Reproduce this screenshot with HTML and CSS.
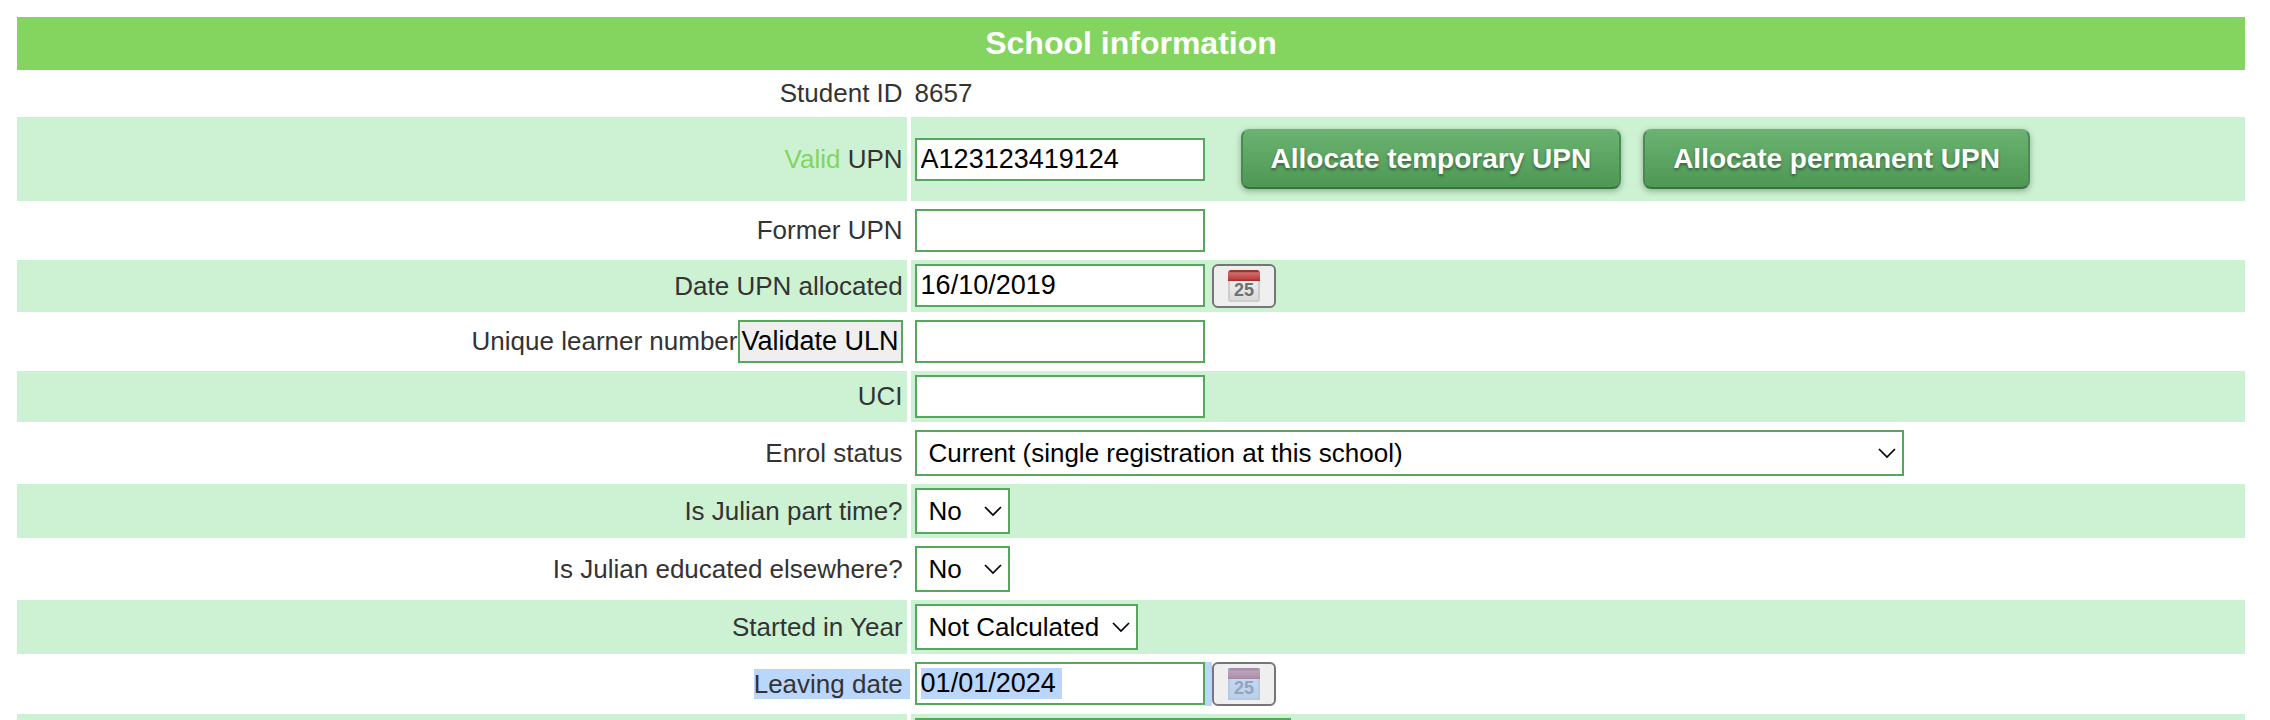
FILE: index.html
```html
<!DOCTYPE html>
<html lang="en">
<head>
  <meta charset="UTF-8">
  <title>School information</title>
  <link rel="stylesheet" href="styles.css">
</head>
<body>
  <svg width="0" height="0" class="defs" aria-hidden="true">
    <defs>
      <linearGradient id="red" x1="0" y1="0" x2="0" y2="1">
        <stop offset="0" stop-color="#a33a38"/>
        <stop offset="0.3" stop-color="#cd6a67"/>
        <stop offset="0.8" stop-color="#bd4441"/>
        <stop offset="1" stop-color="#a02825"/>
      </linearGradient>
      <linearGradient id="page" x1="0" y1="0" x2="0" y2="1">
        <stop offset="0" stop-color="#f2f2f2"/>
        <stop offset="1" stop-color="#d8d8d8"/>
      </linearGradient>
      <symbol id="calendar" viewBox="0 0 32 32">
        <rect x="1" y="8" width="30" height="23" rx="2" fill="url(#page)" stroke="#cdcdcd" stroke-width="2"/>
        <path d="M0 11V3a3 3 0 0 1 3-3h26a3 3 0 0 1 3 3v8z" fill="url(#red)"/>
        <path d="M2 1h28" stroke="#983432" stroke-width="2"/>
        <text x="16" y="26" text-anchor="middle" font-size="18" font-weight="bold" fill="#707070">25</text>
      </symbol>
    </defs>
  </svg>
  <form>
  <table>
    <thead>
      <tr>
        <th colspan="2">School information</th>
      </tr>
    </thead>
    <tbody>
      <tr>
        <td class="name">Student ID</td>
        <td>8657</td>
      </tr>
      <tr>
        <td class="name"><span class="valid">Valid</span> <label for="upn">UPN</label></td>
        <td>
          <div class="upn">
            <input type="text" id="upn" value="A123123419124">
            <div class="actions">
              <button type="button" class="allocate">Allocate temporary UPN</button>
              <button type="button" class="allocate">Allocate permanent UPN</button>
            </div>
          </div>
        </td>
      </tr>
      <tr>
        <td class="name"><label for="former">Former UPN</label></td>
        <td><input type="text" id="former"></td>
      </tr>
      <tr>
        <td class="name"><label for="allocated">Date UPN allocated</label></td>
        <td>
          <div class="date">
            <input type="text" id="allocated" value="16/10/2019"><span class="space"></span><button type="button" class="picker" aria-label="Pick date"><svg width="32" height="32"><use href="#calendar"/></svg></button>
          </div>
        </td>
      </tr>
      <tr>
        <td class="name"><div class="uln"><label for="uln">Unique learner number</label><button type="button" class="validate">Validate ULN</button></div></td>
        <td><input type="text" id="uln"></td>
      </tr>
      <tr>
        <td class="name"><label for="uci">UCI</label></td>
        <td><input type="text" id="uci"></td>
      </tr>
      <tr>
        <td class="name"><label for="enrol">Enrol status</label></td>
        <td>
          <select id="enrol" class="wide">
            <option>Current (single registration at this school)</option>
          </select>
        </td>
      </tr>
      <tr>
        <td class="name"><label for="parttime">Is Julian part time?</label></td>
        <td>
          <select id="parttime">
            <option>No</option>
            <option>Yes</option>
          </select>
        </td>
      </tr>
      <tr>
        <td class="name"><label for="elsewhere">Is Julian educated elsewhere?</label></td>
        <td>
          <select id="elsewhere">
            <option>No</option>
            <option>Yes</option>
          </select>
        </td>
      </tr>
      <tr>
        <td class="name"><label for="started">Started in Year</label></td>
        <td>
          <select id="started">
            <option>Not Calculated</option>
          </select>
        </td>
      </tr>
      <tr class="selected">
        <td class="name"><label for="leaving">Leaving date</label></td>
        <td>
          <div class="date">
            <input type="text" id="leaving" value="01/01/2024"><span class="space"></span><button type="button" class="picker" aria-label="Pick date"><svg width="32" height="32"><use href="#calendar"/></svg></button>
          </div>
        </td>
      </tr>
      <tr>
        <td class="name"></td>
        <td><select class="reason" aria-label="Leaving reason"></select></td>
      </tr>
    </tbody>
  </table>
  </form>
</body>
</html>
```
FILE: styles.css
```css
* {
  box-sizing: border-box;
}
html {
  overflow: hidden;
}
body {
  margin: 13px 21px 13px 13px;
  background: #fff;
  color: #333;
  font-family: "Liberation Sans", Arial, sans-serif;
  font-size: 26px;
  line-height: 31px;
}
.defs {
  position: absolute;
}

table {
  width: 100%;
  border-spacing: 4px;
}
th {
  padding: 8px;
  background: #84d460;
  color: #fff;
  font-size: 32px;
  line-height: 37px;
}
td {
  padding: 4px;
}
tbody tr:nth-child(even) td {
  background: #ccf2d3;
}
.name {
  width: 40%;
  text-align: right;
}
.valid {
  color: #84d460;
}

/* form controls */
input, select, button {
  margin: 0;
  font-family: inherit;
  font-size: 26px;
}
input, select {
  display: block;
  border: 2px solid #55a75c;
  border-radius: 0;
  background-color: #fff;
  color: #000;
}
input {
  width: 290px;
  height: 43px;
  padding: 2px 4px;
  font-size: 27px;
}
select {
  min-width: 95px;
  height: 46px;
  padding: 0 36px 0 12px;
  appearance: none;
  background-image: url("data:image/svg+xml,%3Csvg xmlns='http://www.w3.org/2000/svg' width='18' height='11'%3E%3Cpath d='M1 1l8 8 8-8' fill='none' stroke='%23000' stroke-width='1.7'/%3E%3C/svg%3E");
  background-repeat: no-repeat;
  background-position: right 6px center;
}
.wide {
  width: 989px;
  max-width: 100%;
}
.reason {
  width: 376px;
}

.upn {
  display: flex;
  align-items: center;
  gap: 36px;
}
.actions {
  display: flex;
  gap: 22px;
  padding: 8px 0;
}
.allocate {
  height: 60px;
  padding: 0 28px;
  border: 2px solid #4c8a52;
  border-top-color: #69b270;
  border-bottom-color: #3b703f;
  border-radius: 8px;
  background: linear-gradient(#69b270, #4f9755);
  box-shadow: 0 2px 6px rgba(0, 0, 0, 0.3);
  color: #fff;
  font-size: 28px;
  font-weight: bold;
  text-shadow: 0 2px 3px rgba(0, 0, 0, 0.4);
}

.uln {
  display: flex;
  justify-content: flex-end;
  align-items: center;
}
.validate {
  height: 43px;
  padding: 0 2px;
  border: 2px solid #55a75c;
  background: #efefef;
  color: #000;
  font-size: 27px;
}

.date {
  display: flex;
}
.space {
  width: 7px;
  height: 44px;
}
.picker {
  display: flex;
  align-items: center;
  justify-content: center;
  width: 64px;
  height: 44px;
  padding: 0;
  border: 2px solid #767676;
  border-radius: 6px;
  background: #efefef;
}

/* highlighted row */
.selected label {
  margin-right: -7px;
  padding-right: 7px;
  background: #bad6fb;
}
.selected input {
  background: linear-gradient(#bad6fb, #bad6fb) 4px 4px / 141px 31px no-repeat #fff;
}
.selected .space {
  background: #bad6fb;
}
.selected svg {
  background: #a9c9f3;
}
.selected use {
  opacity: 0.4;
}
```
